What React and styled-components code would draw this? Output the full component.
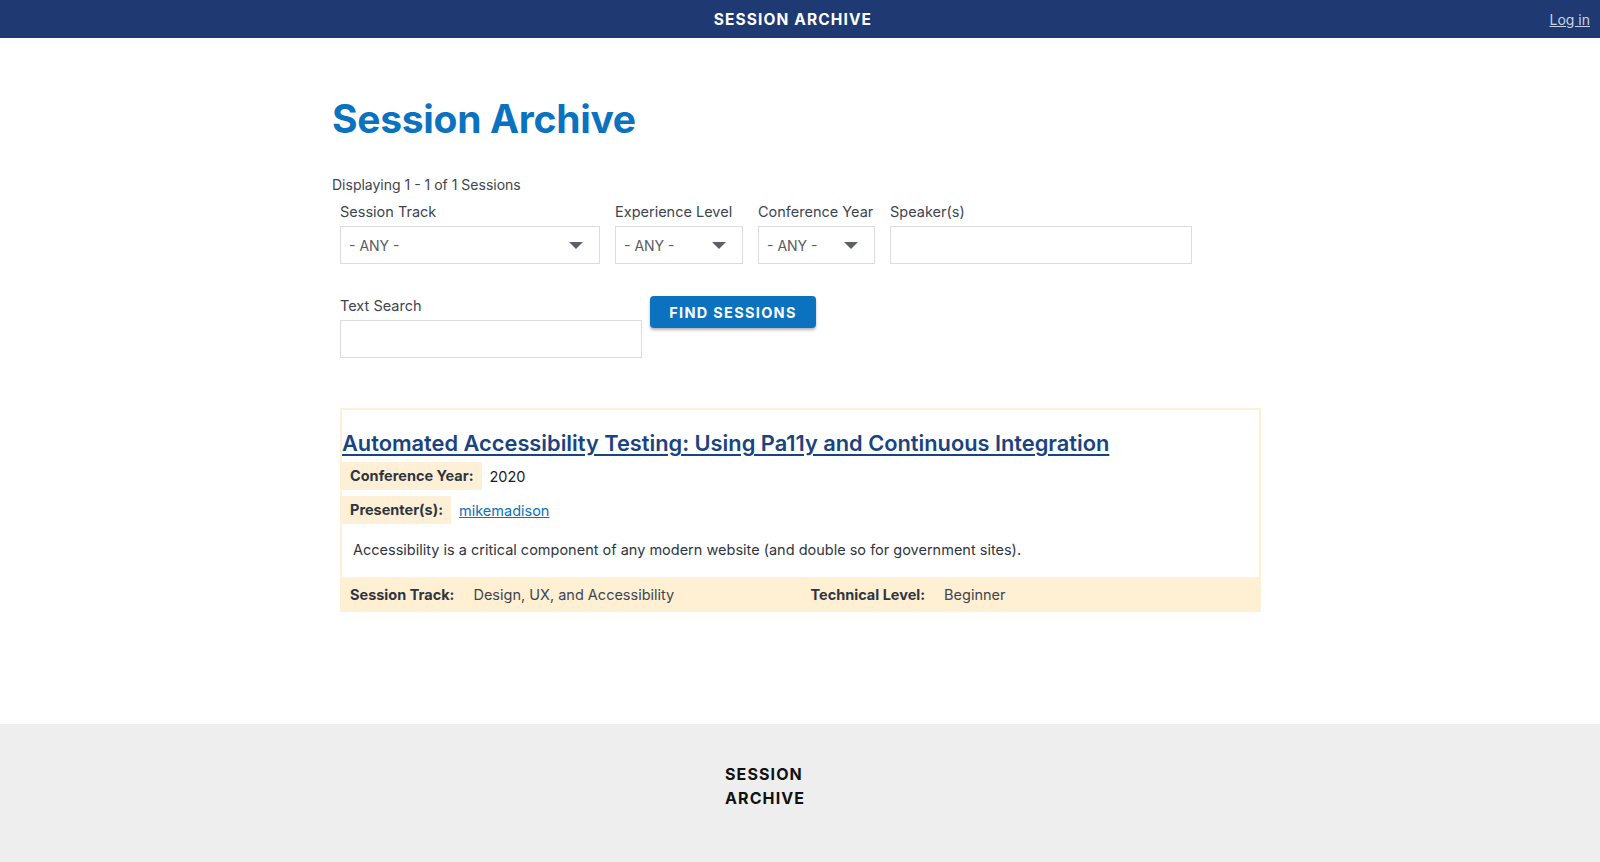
import React from 'react'
import styled, { createGlobalStyle } from 'styled-components'

const GlobalStyle = createGlobalStyle`
  body {
    margin: 0;
    font-family: Inter, "Noto Sans", sans-serif;
    color: #1b1b1b;
    background: #fff;
  }
`

const Page = styled.div`
  min-height: 862px;
  display: flex;
  flex-direction: column;
`

const TopBar = styled.header`
  height: 38px;
  background: #1f3a73;
  display: grid;
  grid-template-columns: 1fr auto 1fr;
  align-items: center;
`

const BarTitle = styled.div`
  grid-column: 2;
  margin-right: 14px;
  color: #fff;
  font-weight: 700;
  font-size: 15.5px;
  letter-spacing: 1.1px;
`

const LoginLink = styled.a`
  justify-self: end;
  margin-right: 10px;
  color: #c9d3e6;
  font-size: 14px;
  text-decoration: underline;
`

const Main = styled.main`
  width: 936px;
  margin: 0 auto;
  padding: 57px 0 112px;
`

const PageTitle = styled.h1`
  margin: 0;
  color: #0a72bf;
  font-size: 39px;
  line-height: 48px;
  font-weight: 700;
  letter-spacing: -0.3px;
`

const Summary = styled.p`
  margin: 31px 0 0;
  font-size: 14px;
  line-height: 22px;
  color: #3d4551;
`

const FilterForm = styled.form`
  display: flex;
  flex-direction: column;
  gap: 32px;
  padding: 6px 8px 0;
`

const FilterRow = styled.div`
  display: flex;
  gap: 15px;
`

const Field = styled.div`
  display: flex;
  flex-direction: column;
  gap: 4px;
`

const Label = styled.label`
  font-size: 14.5px;
  line-height: 20px;
  color: #3d4551;
`

const SelectBox = styled.div`
  box-sizing: border-box;
  width: ${p => p.$w}px;
  height: 38px;
  border: 1px solid #dcdcdc;
  display: flex;
  align-items: center;
  justify-content: space-between;
  padding: 0 16px 0 8px;
  font-size: 14px;
  color: #565c65;
`

const Arrow = styled.span`
  width: 0;
  height: 0;
  border-left: 7px solid transparent;
  border-right: 7px solid transparent;
  border-top: 7px solid #5c6068;
`

const TextInput = styled.input`
  box-sizing: border-box;
  width: ${p => p.$w}px;
  height: 38px;
  border: 1px solid #dcdcdc;
  margin: 0;
`

const FindButton = styled.button`
  align-self: flex-start;
  margin-left: -7px;
  width: 166px;
  height: 32px;
  border: 0;
  border-radius: 4px;
  background: #0a72bf;
  color: #fff;
  font-family: inherit;
  font-weight: 700;
  font-size: 14.5px;
  letter-spacing: 1.3px;
  box-shadow: 0 2px 3px rgba(0, 0, 0, 0.3);
`

const Card = styled.article`
  margin: 50px 7px 0 8px;
  border: 2px solid #fdf0d6;
  border-bottom: 0;
`

const CardTitle = styled.a`
  display: block;
  padding: 18px 0 4px;
  color: #1a4480;
  font-size: 21.8px;
  line-height: 30px;
  font-weight: 600;
  text-decoration: underline;
  text-underline-offset: 3px;
`

const MetaRow = styled.div`
  display: flex;
  align-items: center;
  gap: 8px;
  margin-bottom: 6px;
  font-size: 14.5px;
`

const MetaLabel = styled.span`
  background: #fdf0d6;
  padding: 0 8px;
  line-height: 28px;
  font-weight: 700;
  color: #2f3540;
`

const MetaLink = styled.a`
  color: #0a72bf;
  text-decoration: underline;
`

const Description = styled.p`
  margin: 0;
  padding: 9px 11px 16px;
  font-size: 14.5px;
  line-height: 22px;
  color: #2f3540;
`

const InfoBar = styled.div`
  display: grid;
  grid-template-columns: 1fr 1fr;
  background: #fff0d4;
  margin: 0 -2px;
  height: 35px;
  align-items: center;
  font-size: 14.5px;
`

const InfoCell = styled.div`
  display: flex;
  gap: 19px;
  padding-left: 10px;
  color: #3d4551;
`

const InfoLabel = styled.span`
  font-weight: 700;
  color: #2f3540;
`

const Footer = styled.footer`
  flex: 1;
  background: #eeeeee;
  padding: 38px 0 40px;
`

const FooterInner = styled.div`
  width: 150px;
  margin: 0 auto;
`

const FooterLogo = styled.div`
  width: 90px;
  font-size: 16px;
  line-height: 24px;
  font-weight: 700;
  letter-spacing: 1.1px;
  color: #111;
`

const Select = ({ w }) => (
  <SelectBox $w={w}>
    - ANY -
    <Arrow />
  </SelectBox>
)

export default function App() {
  return (
    <Page>
      <GlobalStyle />
      <TopBar>
        <BarTitle>SESSION ARCHIVE</BarTitle>
        <LoginLink href="#">Log in</LoginLink>
      </TopBar>
      <Main>
        <PageTitle>Session Archive</PageTitle>
        <Summary>Displaying 1 - 1 of 1 Sessions</Summary>
        <FilterForm>
          <FilterRow>
            <Field>
              <Label>Session Track</Label>
              <Select w={260} />
            </Field>
            <Field>
              <Label>Experience Level</Label>
              <Select w={128} />
            </Field>
            <Field>
              <Label>Conference Year</Label>
              <Select w={117} />
            </Field>
            <Field>
              <Label>Speaker(s)</Label>
              <TextInput $w={302} />
            </Field>
          </FilterRow>
          <FilterRow>
            <Field>
              <Label>Text Search</Label>
              <TextInput $w={302} />
            </Field>
            <FindButton type="button">FIND SESSIONS</FindButton>
          </FilterRow>
        </FilterForm>
        <Card>
          <CardTitle href="#">Automated Accessibility Testing: Using Pa11y and Continuous Integration</CardTitle>
          <MetaRow>
            <MetaLabel>Conference Year:</MetaLabel>
            <span>2020</span>
          </MetaRow>
          <MetaRow>
            <MetaLabel>Presenter(s):</MetaLabel>
            <MetaLink href="#">mikemadison</MetaLink>
          </MetaRow>
          <Description>Accessibility is a critical component of any modern website (and double so for government sites).</Description>
          <InfoBar>
            <InfoCell>
              <InfoLabel>Session Track:</InfoLabel>
              <span>Design, UX, and Accessibility</span>
            </InfoCell>
            <InfoCell>
              <InfoLabel>Technical Level:</InfoLabel>
              <span>Beginner</span>
            </InfoCell>
          </InfoBar>
        </Card>
      </Main>
      <Footer>
        <FooterInner>
          <FooterLogo>SESSION ARCHIVE</FooterLogo>
        </FooterInner>
      </Footer>
    </Page>
  )
}
